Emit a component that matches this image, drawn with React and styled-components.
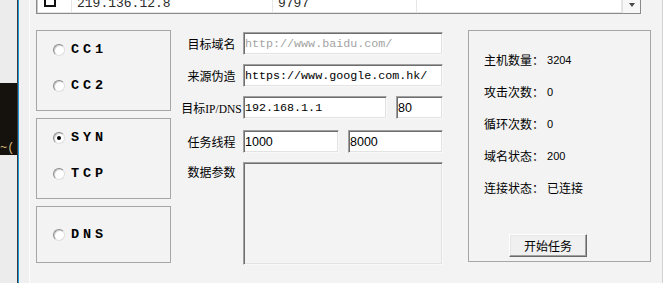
import React from 'react';
import styled, { createGlobalStyle } from 'styled-components';

const Global = createGlobalStyle`
  html, body { margin: 0; padding: 0; width: 663px; height: 283px; overflow: hidden; background: #f3f3f3; }
  body { font-family: "Noto Sans CJK SC", "Liberation Sans", sans-serif; font-size: 12px; color: #000; }
  * { box-sizing: border-box; }
`;

const Screen = styled.div`
  display: flex;
  width: 663px;
  height: 283px;
  overflow: hidden;
`;

const Backdrop = styled.div`
  flex: none;
  width: 17px;
  display: flex;
  flex-direction: column;
  background: #ececec;
`;

const Terminal = styled.div`
  margin-top: 83px;
  height: 72px;
  background: #15110d;
  color: #d9b877;
  font-family: "Liberation Mono", monospace;
  font-size: 12px;
  line-height: 12px;
  display: flex;
  align-items: flex-end;
  padding-bottom: 1px;
  overflow: hidden;
  white-space: nowrap;
`;

const Edge = styled.div`
  flex: none;
  width: ${(p) => p.$w || 1}px;
  background: ${(p) => p.$color};
`;

const Window = styled.div`
  flex: none;
  width: 634px;
  border-left: 1px solid #fbfbfb;
  border-right: 1px solid #d2d2d2;
  background: #f3f3f3;
  padding-left: 6px;
  display: flex;
  flex-direction: column;
`;

const ListView = styled.div`
  width: 605px;
  height: 14px;
  display: flex;
  background: #fff;
  border: 1px solid #8a8a8a;
  border-top: none;
  box-shadow: inset 1px 0 0 #c8c8c8, inset -1px -1px 0 #e4e4e4;
`;

const Cell = styled.div`
  flex: ${(p) => (p.$w ? 'none' : '1')};
  width: ${(p) => (p.$w ? `${p.$w}px` : 'auto')};
  height: 13px;
  overflow: hidden;
  display: flex;
  align-items: flex-end;
  padding-left: ${(p) => p.$pad || 0}px;
  border-right: 1px solid #e6e6e6;
`;

const CellText = styled.span`
  flex: none;
  height: 18px;
  line-height: 18px;
  font-family: "Liberation Mono", monospace;
  font-size: 13px;
  color: #2a2a2a;
  white-space: nowrap;
`;

const CheckSquare = styled.span`
  flex: none;
  width: 12px;
  height: 14px;
  margin-left: 7px;
  margin-bottom: 6px;
  border: 2px solid #111;
  background: #fff;
`;

const DropButton = styled.div`
  flex: none;
  width: 18px;
  height: 13px;
  display: flex;
  justify-content: center;
  align-items: flex-start;
  padding-top: 3px;
  background: #f7f7f7;
  border-left: 1px solid #e2e2e2;
`;

const Arrow = styled.span`
  width: 0;
  height: 0;
  border-left: 3.5px solid transparent;
  border-right: 3.5px solid transparent;
  border-top: 4px solid #4a4a4a;
`;

const MainRow = styled.div`
  display: flex;
  align-items: flex-start;
  margin-top: 16px;
`;

const LeftCol = styled.div`
  flex: none;
  width: 135px;
  display: flex;
  flex-direction: column;
  gap: 7px;
`;

const GroupBox = styled.div`
  height: ${(p) => p.$h}px;
  border: 1px solid #a6a6a6;
  display: flex;
  flex-direction: column;
  justify-content: ${(p) => (p.$center ? 'center' : 'flex-start')};
  padding-top: ${(p) => (p.$center ? 0 : 12)}px;
  gap: 22px;
`;

const Option = styled.label`
  display: flex;
  align-items: center;
  height: 14px;
  padding-left: 16px;
`;

const RadioDot = styled.span`
  flex: none;
  width: 12px;
  height: 12px;
  margin-right: 6px;
  border-radius: 50%;
  border: 1px solid;
  border-color: #8a8a8a #dedede #dedede #8a8a8a;
  background: #fff;
  box-shadow: inset 1px 1px 0 #cfcfcf;
  display: flex;
  align-items: center;
  justify-content: center;
  &::after {
    content: '';
    display: ${(p) => (p.$checked ? 'block' : 'none')};
    width: 4px;
    height: 4px;
    border-radius: 50%;
    background: #000;
  }
`;

const OptionText = styled.span`
  font-family: "Liberation Mono", monospace;
  font-weight: bold;
  font-size: 13.5px;
  letter-spacing: 3.9px;
  line-height: 14px;
  color: #000;
`;

const Form = styled.div`
  flex: none;
  width: 263px;
  margin-left: 9px;
  padding-top: 2px;
  display: grid;
  grid-template-columns: 63px 200px;
  row-gap: 9px;
`;

const FieldLabel = styled.div`
  text-align: center;
  line-height: ${(p) => (p.$top ? '14px' : '23px')};
  padding-top: ${(p) => (p.$top ? 3 : 0)}px;
  font-family: "Noto Sans CJK SC", sans-serif;
  font-size: 12px;
  white-space: nowrap;
  color: #000;
`;

const LatinPart = styled.span`
  font-family: "Liberation Serif", serif;
  font-size: 11.5px;
`;

const FieldRow = styled.div`
  display: flex;
  gap: 9px;
`;

const sunken = `
  border: 1px solid;
  border-color: #a0a0a0 #f8f8f8 #f8f8f8 #a0a0a0;
  box-shadow: inset 1px 1px 0 #6e6e6e, inset -1px -1px 0 #e3e3e3;
  outline: none;
  margin: 0;
`;

const TextBox = styled.input`
  ${sunken}
  width: ${(p) => p.$w}px;
  height: 23px;
  padding: 0 0 0 1px;
  background: #fff;
  color: ${(p) => (p.$muted ? '#a3a3a3' : '#000')};
  font-family: ${(p) => (p.$mono ? '"Liberation Mono", monospace' : '"Liberation Sans", sans-serif')};
  font-size: ${(p) => (p.$mono ? '11.7px' : '12.5px')};
`;

const DataArea = styled.textarea`
  ${sunken}
  width: 200px;
  height: 103px;
  background: #f3f3f3;
  resize: none;
  padding: 2px;
  font-family: "Liberation Mono", monospace;
  font-size: 12px;
`;

const StatusGroup = styled.div`
  flex: none;
  width: 183px;
  height: 232px;
  margin-left: 25px;
  border: 1px solid #a6a6a6;
  display: flex;
  flex-direction: column;
  gap: 16px;
  padding: 21px 0 4px 15px;
`;

const StatusRow = styled.div`
  display: flex;
  align-items: center;
  height: 16px;
  line-height: 16px;
  white-space: nowrap;
`;

const StatusKey = styled.span`
  font-family: "Noto Sans CJK SC", sans-serif;
  font-size: 12px;
  color: #000;
`;

const StatusValue = styled.span`
  margin-left: 3px;
  font-family: ${(p) => (p.$cjk ? '"Noto Sans CJK SC", sans-serif' : '"Liberation Sans", sans-serif')};
  font-size: ${(p) => (p.$cjk ? '12px' : '11px')};
  color: #000;
`;

const StartButton = styled.button`
  margin-top: auto;
  margin-left: 25px;
  width: 78px;
  height: 23px;
  padding: 0;
  border: 1px solid;
  border-color: #fff #696969 #696969 #fff;
  box-shadow: inset -1px -1px 0 #a0a0a0, inset 1px 1px 0 #e6e6e6;
  background: #f0f0f0;
  font-family: "Noto Sans CJK SC", sans-serif;
  font-size: 12px;
  color: #000;
`;

const modes = [
  { h: 81, items: [{ t: 'CC1' }, { t: 'CC2' }] },
  { h: 81, items: [{ t: 'SYN', on: true }, { t: 'TCP' }] },
  { h: 57, center: true, items: [{ t: 'DNS' }] },
];

const stats = [
  { k: '主机数量：', v: '3204' },
  { k: '攻击次数：', v: '0' },
  { k: '循环次数：', v: '0' },
  { k: '域名状态：', v: '200' },
  { k: '连接状态：', v: '已连接', cjk: true },
];

export default function App() {
  return (
    <>
      <Global />
      <Screen>
        <Backdrop>
          <Terminal>~(</Terminal>
        </Backdrop>
        <Edge $color="#3b3b3b" />
        <Edge $color="#1c9ad6" />
        <Edge $color="#f0f0f0" $w={10} />
        <Window>
          <ListView>
            <Cell $w={35}>
              <CheckSquare />
            </Cell>
            <Cell $w={201} $pad={5}>
              <CellText>219.136.12.8</CellText>
            </Cell>
            <Cell $w={144} $pad={5}>
              <CellText>9797</CellText>
            </Cell>
            <Cell />
            <DropButton>
              <Arrow />
            </DropButton>
          </ListView>
          <MainRow>
            <LeftCol>
              {modes.map((g, i) => (
                <GroupBox key={i} $h={g.h} $center={g.center}>
                  {g.items.map((it) => (
                    <Option key={it.t}>
                      <RadioDot $checked={it.on} />
                      <OptionText>{it.t}</OptionText>
                    </Option>
                  ))}
                </GroupBox>
              ))}
            </LeftCol>
            <Form>
              <FieldLabel>目标域名</FieldLabel>
              <TextBox readOnly $w={200} $mono $muted value="http://www.baidu.com/" />
              <FieldLabel>来源伪造</FieldLabel>
              <TextBox readOnly $w={200} $mono value="https://www.google.com.hk/" />
              <FieldLabel>
                目标<LatinPart>IP/DNS</LatinPart>
              </FieldLabel>
              <FieldRow>
                <TextBox readOnly $w={144} $mono value="192.168.1.1" />
                <TextBox readOnly $w={47} value="80" />
              </FieldRow>
              <FieldLabel>任务线程</FieldLabel>
              <FieldRow>
                <TextBox readOnly $w={96} value="1000" />
                <TextBox readOnly $w={95} value="8000" />
              </FieldRow>
              <FieldLabel $top>数据参数</FieldLabel>
              <DataArea readOnly value="" />
            </Form>
            <StatusGroup>
              {stats.map((s) => (
                <StatusRow key={s.k}>
                  <StatusKey>{s.k}</StatusKey>
                  <StatusValue $cjk={s.cjk}>{s.v}</StatusValue>
                </StatusRow>
              ))}
              <StartButton>开始任务</StartButton>
            </StatusGroup>
          </MainRow>
        </Window>
      </Screen>
    </>
  );
}
